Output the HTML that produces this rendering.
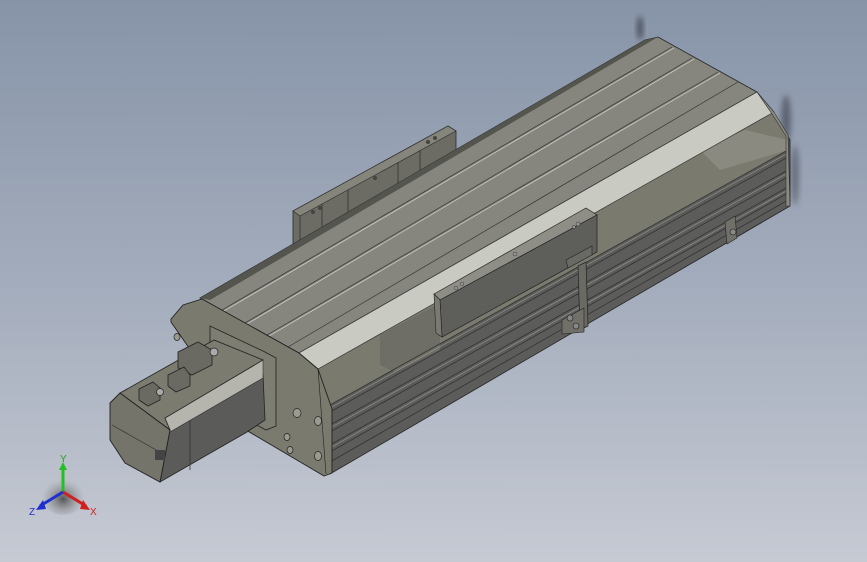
<!DOCTYPE html>
<html><head><meta charset="utf-8"><style>
html,body{margin:0;padding:0;width:867px;height:562px;overflow:hidden}
body{background:linear-gradient(180deg,#8794a8 0%,#a3acbc 50%,#c6cad3 100%)}
svg{position:absolute;left:0;top:0}
</style></head><body>
<svg width="867" height="562" viewBox="0 0 867 562" xmlns="http://www.w3.org/2000/svg">
<defs>
<filter id="b" x="-50%" y="-50%" width="200%" height="200%"><feGaussianBlur stdDeviation="3"/></filter>
<radialGradient id="tri" cx="0.5" cy="0.6" r="0.5"><stop offset="0" stop-color="#555"/><stop offset="1" stop-color="#999" stop-opacity="0"/></radialGradient>
</defs>
<!-- shadow blur at back -->
<ellipse cx="640" cy="28" rx="3" ry="12" fill="#3a3e48" filter="url(#b)" opacity="0.8"/>
<ellipse cx="786" cy="120" rx="5" ry="25" fill="#3a3e48" filter="url(#b)" opacity="0.6"/>
<ellipse cx="795" cy="175" rx="4" ry="30" fill="#3a3e48" filter="url(#b)" opacity="0.5"/>
<!-- back bracket -->
<polygon points="293,211 448,126 456,131 456,154 299,248 293,245" fill="#6c6c64" stroke="#2a2a2a" stroke-width="0.8"/>
<polygon points="293,211 448,126 456,131 300,216" fill="#85857c" stroke="#2a2a2a" stroke-width="0.6"/>
<line x1="300" y1="216" x2="300" y2="248" stroke="#333" stroke-width="0.8"/>
<line x1="322" y1="204" x2="322" y2="235" stroke="#333" stroke-width="0.8"/>
<line x1="348" y1="190" x2="348" y2="220" stroke="#333" stroke-width="0.8"/>
<line x1="398" y1="162" x2="398" y2="192" stroke="#333" stroke-width="0.8"/>
<line x1="420" y1="150" x2="420" y2="179" stroke="#333" stroke-width="0.8"/>
<circle cx="313" cy="212" r="2" fill="#444"/><circle cx="320" cy="208" r="2" fill="#444"/>
<circle cx="375" cy="178" r="2" fill="#444"/>
<circle cx="428" cy="142" r="2" fill="#444"/><circle cx="435" cy="138" r="2" fill="#444"/>
<!-- main side face -->
<polygon points="318,369 772,113 790,140 790,206 330,474 326,474" fill="#5c5c5a" stroke="#222" stroke-width="0.8"/>
<polygon points="318,369 772,113 788,135 788,150 330,405 322,400" fill="#7a7a6e"/>
<polygon points="700,150 745,130 788,140 788,150 720,170" fill="#8a8a80"/>
<polygon points="380,335 440,303 440,350 395,372 380,365" fill="#6e6e66"/>
<g stroke="#333" stroke-width="0.8">
<line x1="330" y1="405" x2="788" y2="150"/>
<line x1="330" y1="412" x2="788" y2="157"/>
<line x1="330" y1="425" x2="788" y2="170"/>
<line x1="330" y1="432" x2="788" y2="177"/>
<line x1="330" y1="445" x2="788" y2="187"/>
<line x1="330" y1="452" x2="788" y2="193"/>
<line x1="330" y1="462" x2="788" y2="200"/>
</g>
<g stroke="#9a9a92" stroke-width="0.6">
<line x1="330" y1="408" x2="788" y2="153"/>
<line x1="330" y1="428" x2="788" y2="173"/>
<line x1="330" y1="448" x2="788" y2="190"/>
</g>
<!-- top face -->
<polygon points="200,298 645,40 658,37 757,92 299,353" fill="#86867f" stroke="#222" stroke-width="0.8"/>
<polygon points="200,298 645,40 658,37 210,300" fill="#55554f"/>
<g stroke="#333" stroke-width="0.7">
<line x1="222" y1="310" x2="672" y2="47"/>
<line x1="245" y1="323" x2="692" y2="58"/>
<line x1="267" y1="335" x2="718" y2="72"/>
<line x1="288" y1="347" x2="738" y2="82"/>
</g>
<g stroke="#dedcd2" stroke-width="0.6">
<line x1="224" y1="311" x2="674" y2="48"/>
<line x1="247" y1="324" x2="694" y2="59"/>
<line x1="269" y1="336" x2="720" y2="73"/>
</g>
<polygon points="299,353 757,92 774,112 318,369" fill="#c9cac2" stroke="#333" stroke-width="0.7"/>
<polygon points="757,92 774,112 788,135 790,206 786,206 786,136 772,114" fill="#8a8a80" stroke="#333" stroke-width="0.6"/>
<!-- carriage -->
<polygon points="434,294 586,208 597,215 440,300" fill="#8e8e86" stroke="#222" stroke-width="0.7"/>
<polygon points="440,300 597,215 597,252 442,337" fill="#5e5e5b" stroke="#222" stroke-width="0.7"/>
<polygon points="434,294 440,300 442,337 436,333" fill="#7a7a70" stroke="#222" stroke-width="0.6"/>
<circle cx="578" cy="224" r="2" fill="#999" stroke="#333" stroke-width="0.5"/>
<circle cx="574" cy="227" r="1.5" fill="#999" stroke="#333" stroke-width="0.5"/>
<circle cx="515" cy="254" r="2" fill="#999" stroke="#333" stroke-width="0.5"/>
<circle cx="456" cy="288" r="1.8" fill="#999" stroke="#333" stroke-width="0.5"/>
<circle cx="462" cy="284" r="1.8" fill="#999" stroke="#333" stroke-width="0.5"/>
<polygon points="566,260 592,246 592,255 568,268" fill="#6a6a64" stroke="#222" stroke-width="0.6"/>
<polygon points="578,266 586,262 588,326 580,330" fill="#6a6a64" stroke="#222" stroke-width="0.7"/>
<polygon points="562,320 584,308 584,332 562,334" fill="#707068" stroke="#222" stroke-width="0.6"/>
<circle cx="570" cy="318" r="3" fill="#888" stroke="#222" stroke-width="0.6"/>
<circle cx="576" cy="326" r="3" fill="#888" stroke="#222" stroke-width="0.6"/>
<polygon points="725,222 735,216 737,238 727,244" fill="#707068" stroke="#222" stroke-width="0.6"/>
<circle cx="733" cy="232" r="3" fill="#888" stroke="#222" stroke-width="0.6"/>
<!-- front end plate -->
<polygon points="202,299 299,353 318,369 332,409 332,473 324,476 246,430 171,322 171,319 183,305" fill="#7a7a6e" stroke="#222" stroke-width="0.9"/>
<line x1="299" y1="353" x2="318" y2="369" stroke="#222" stroke-width="0.8"/>
<line x1="318" y1="369" x2="326" y2="474" stroke="#222" stroke-width="0.6"/>
<g fill="#9a9a90" stroke="#222" stroke-width="0.7">
<ellipse cx="297" cy="413" rx="4" ry="4.5"/>
<ellipse cx="318" cy="421" rx="3.5" ry="4.5"/>
<ellipse cx="287" cy="437" rx="3" ry="3.5"/>
<ellipse cx="290" cy="450" rx="3" ry="3.5"/>
<ellipse cx="318" cy="456" rx="3.5" ry="4.5"/>
<ellipse cx="177" cy="337" rx="3" ry="3.5"/>
</g>
<!-- motor flange -->
<polygon points="210,326 265,352 276,358 276,426 266,430 210,400" fill="#7d7d72" stroke="#222" stroke-width="0.8"/>
<polygon points="170,430 263,375 265,420 247,432 160,482" fill="#5b5b5a" stroke="#222" stroke-width="0.8"/>
<polygon points="165,418 263,360 263,378 170,432" fill="#b5b5ad" stroke="#333" stroke-width="0.6"/>
<line x1="190" y1="420" x2="190" y2="470" stroke="#333" stroke-width="0.8"/>
<polygon points="120,393 214,340 263,360 165,418 170,430" fill="#7b7b70" stroke="#222" stroke-width="0.8"/>
<polygon points="110,403 120,393 170,430 160,482 125,463 110,440" fill="#74746a" stroke="#222" stroke-width="0.9"/>
<line x1="112" y1="425" x2="165" y2="455" stroke="#333" stroke-width="0.7"/>
<rect x="155" y="450" width="10" height="10" fill="#444"/>
<polygon points="178,352 198,342 212,350 212,365 192,375 178,368" fill="#6a6a62" stroke="#222" stroke-width="0.8"/>
<circle cx="214" cy="352" r="4" fill="#aaa" stroke="#222" stroke-width="0.7"/>
<polygon points="168,375 184,367 190,375 190,386 176,392 168,386" fill="#6a6a62" stroke="#222" stroke-width="0.8"/>
<polygon points="139,389 153,382 160,388 160,400 148,406 139,400" fill="#6a6a62" stroke="#222" stroke-width="0.8"/>
<circle cx="160" cy="392" r="3.5" fill="#aaa" stroke="#222" stroke-width="0.7"/>
<!-- triad -->
<ellipse cx="63" cy="495" rx="22" ry="20" fill="url(#tri)"/>
<line x1="63" y1="492" x2="63" y2="468" stroke="#22c022" stroke-width="3"/>
<polygon points="59,470 67,470 63,462" fill="#22c022"/>
<line x1="63" y1="492" x2="86" y2="506" stroke="#d02020" stroke-width="3"/>
<polygon points="83,500 90,510 80,509" fill="#d02020"/>
<line x1="63" y1="492" x2="40" y2="506" stroke="#2030d0" stroke-width="3"/>
<polygon points="43,500 36,510 46,509" fill="#2030d0"/>
<text x="60" y="462" font-family="Liberation Sans, sans-serif" font-size="10" fill="#22a022">Y</text>
<text x="90" y="515" font-family="Liberation Sans, sans-serif" font-size="10" fill="#d02020">X</text>
<text x="29" y="515" font-family="Liberation Sans, sans-serif" font-size="10" fill="#2030d0">Z</text>
</svg>
</body></html>
